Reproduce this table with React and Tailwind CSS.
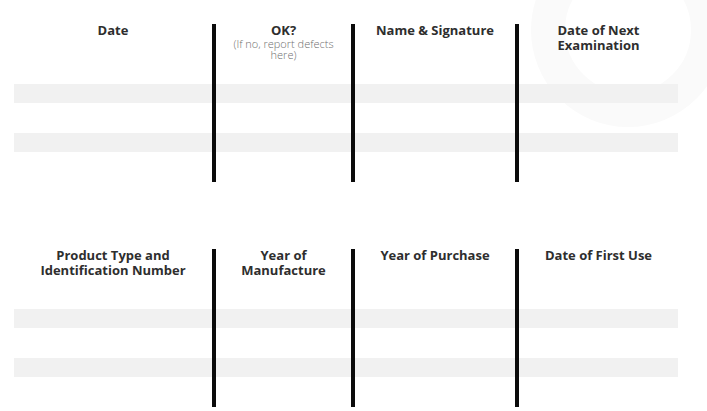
import React from "react";

const font = { fontFamily: '"Open Sans", "Liberation Sans", sans-serif' };

function Column({ first, children }) {
  return (
    <div className={`flex flex-col ${first ? "" : "border-l-4 border-[#0b0b0b]"}`}>
      <div className="h-[60px] flex flex-col items-center text-center">{children}</div>
      <div className="h-[19px] bg-[#f1f1f1]" />
      <div className="h-[30px]" />
      <div className="h-[19px] bg-[#f1f1f1]" />
      <div className="h-[30px]" />
    </div>
  );
}

function Title({ children }) {
  return (
    <div className="text-[13px] leading-[15px] font-bold text-[#2e2e2e] -mt-[1px]">{children}</div>
  );
}

function Table({ cols }) {
  return (
    <div className="ml-[14px] w-[664px] grid grid-cols-[198px_139px_164px_163px]">
      {cols.map((c, i) => (
        <Column key={i} first={i === 0}>
          {c}
        </Column>
      ))}
    </div>
  );
}

export default function App() {
  return (
    <div className="relative w-[707px] h-[411px] overflow-hidden bg-white" style={font}>
      <svg className="absolute left-0 top-0 pointer-events-none" width="707" height="411">
        <circle cx="628" cy="30" r="80" fill="none" stroke="#fafafa" strokeWidth="34" />
      </svg>
      <div className="relative pt-[24px] flex flex-col gap-[67px]">
        <Table
          cols={[
            <Title>Date</Title>,
            <>
              <Title>OK?</Title>
              <div className="text-[11px] leading-[11px] font-light text-[#6f6f6f]">
                (If no, report defects
                <br />
                here)
              </div>
            </>,
            <Title>Name &amp; Signature</Title>,
            <Title>
              Date of Next
              <br />
              Examination
            </Title>,
          ]}
        />
        <Table
          cols={[
            <Title>
              Product Type and
              <br />
              Identification Number
            </Title>,
            <Title>
              Year of
              <br />
              Manufacture
            </Title>,
            <Title>Year of Purchase</Title>,
            <Title>Date of First Use</Title>,
          ]}
        />
      </div>
    </div>
  );
}
